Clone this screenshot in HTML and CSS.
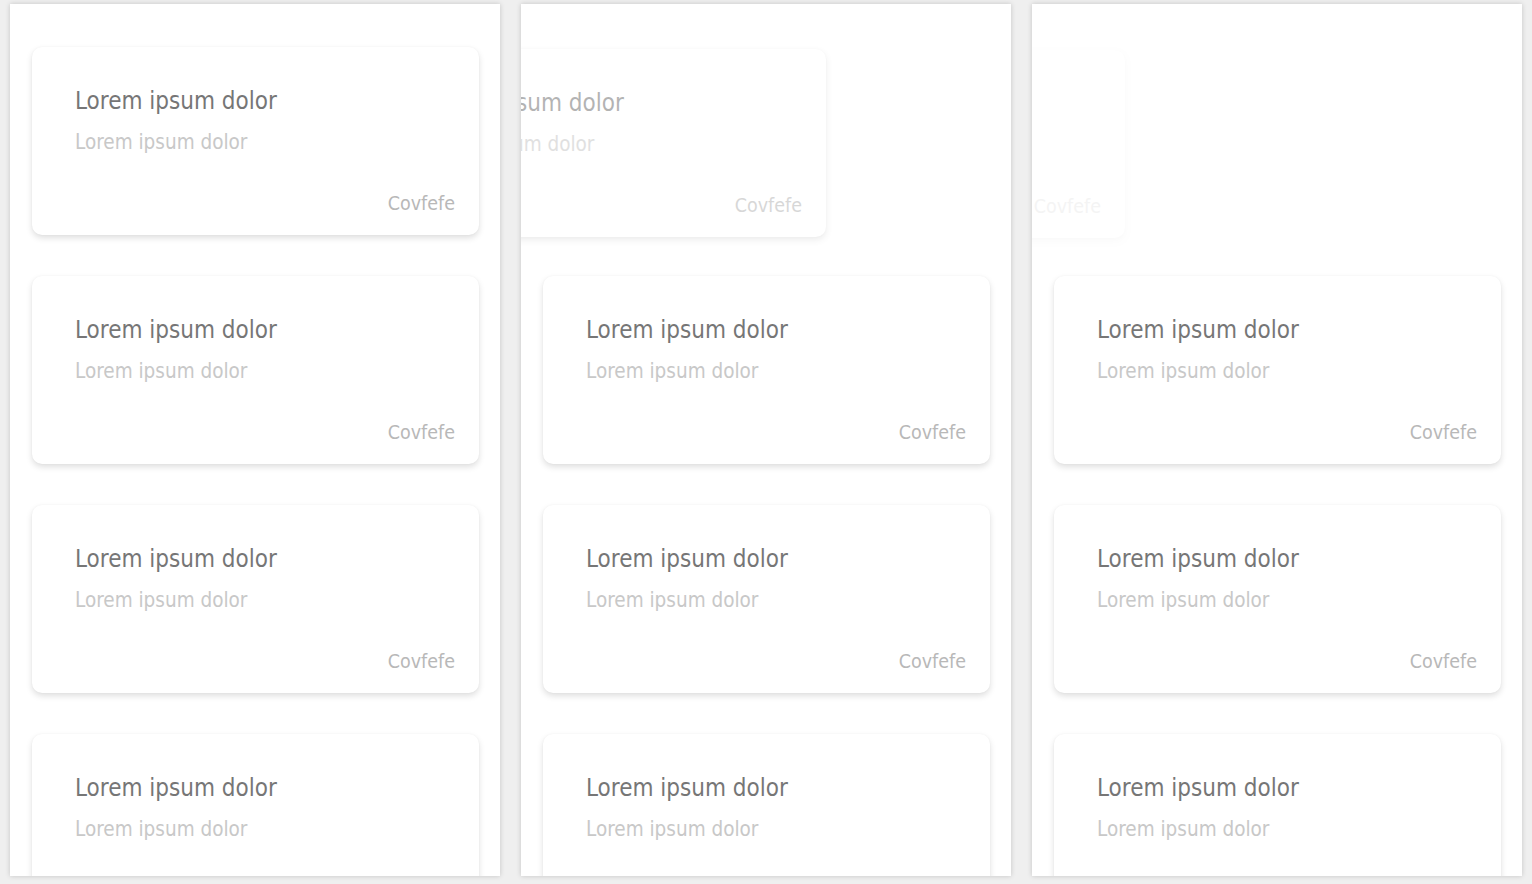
FILE: index.html
```html
<!DOCTYPE html>
<html>
<head>
<meta charset="utf-8">
<link rel="stylesheet" href="styles.css">
</head>
<body>
<div class="stage">
  <section class="panel">
    <div class="list">
      <div class="card"><div class="title">Lorem ipsum dolor</div><div class="sub">Lorem ipsum dolor</div><div class="foot">Covfefe</div></div>
      <div class="card"><div class="title">Lorem ipsum dolor</div><div class="sub">Lorem ipsum dolor</div><div class="foot">Covfefe</div></div>
      <div class="card"><div class="title">Lorem ipsum dolor</div><div class="sub">Lorem ipsum dolor</div><div class="foot">Covfefe</div></div>
      <div class="card"><div class="title">Lorem ipsum dolor</div><div class="sub">Lorem ipsum dolor</div><div class="foot">Covfefe</div></div>
    </div>
  </section>
  <section class="panel">
    <div class="list">
      <div class="card leaving-1"><div class="title">Lorem ipsum dolor</div><div class="sub">Lorem ipsum dolor</div><div class="foot">Covfefe</div></div>
      <div class="card"><div class="title">Lorem ipsum dolor</div><div class="sub">Lorem ipsum dolor</div><div class="foot">Covfefe</div></div>
      <div class="card"><div class="title">Lorem ipsum dolor</div><div class="sub">Lorem ipsum dolor</div><div class="foot">Covfefe</div></div>
      <div class="card"><div class="title">Lorem ipsum dolor</div><div class="sub">Lorem ipsum dolor</div><div class="foot">Covfefe</div></div>
    </div>
  </section>
  <section class="panel">
    <div class="list">
      <div class="card leaving-2"><div class="title">Lorem ipsum dolor</div><div class="sub">Lorem ipsum dolor</div><div class="foot">Covfefe</div></div>
      <div class="card"><div class="title">Lorem ipsum dolor</div><div class="sub">Lorem ipsum dolor</div><div class="foot">Covfefe</div></div>
      <div class="card"><div class="title">Lorem ipsum dolor</div><div class="sub">Lorem ipsum dolor</div><div class="foot">Covfefe</div></div>
      <div class="card"><div class="title">Lorem ipsum dolor</div><div class="sub">Lorem ipsum dolor</div><div class="foot">Covfefe</div></div>
    </div>
  </section>
</div>
</body>
</html>
```

FILE: styles.css
```css
html, body {
  margin: 0;
  padding: 0;
  background: #efefef;
}
body {
  font-family: "DejaVu Sans Condensed", "Liberation Sans Narrow", "Roboto", sans-serif;
}
.stage {
  display: flex;
  gap: 21px;
  padding: 4px 10px 0 10px;
  height: 884px;
  box-sizing: border-box;
}
.panel {
  width: 490px;
  height: 872px;
  flex-shrink: 0;
  background: #ffffff;
  overflow: hidden;
  box-shadow: 0 0 5px rgba(0, 0, 0, 0.18);
}
.list {
  display: flex;
  flex-direction: column;
  gap: 41px;
  padding: 43px 21px 0 22px;
}
.card {
  height: 188px;
  flex-shrink: 0;
  box-sizing: border-box;
  background: #ffffff;
  border-radius: 10px;
  box-shadow: 0 3px 6px rgba(0, 0, 0, 0.13), 0 0 2px rgba(0, 0, 0, 0.04);
  display: flex;
  flex-direction: column;
  padding: 39px 24px 18px 43px;
}
.title {
  font-size: 24px;
  line-height: 30px;
  letter-spacing: 0;
  color: #767676;
}
.sub {
  margin-top: 13px;
  font-size: 20.5px;
  line-height: 26px;
  letter-spacing: 0;
  color: #c8c8c8;
}
.foot {
  margin-top: auto;
  align-self: flex-end;
  font-size: 19.5px;
  line-height: 26px;
  letter-spacing: 0;
  color: #b8b8b8;
}
.leaving-1 {
  transform: translate(-164px, 2px);
  opacity: 0.55;
}
.leaving-2 {
  transform: translate(-376px, 3px);
  opacity: 0.15;
}
```
